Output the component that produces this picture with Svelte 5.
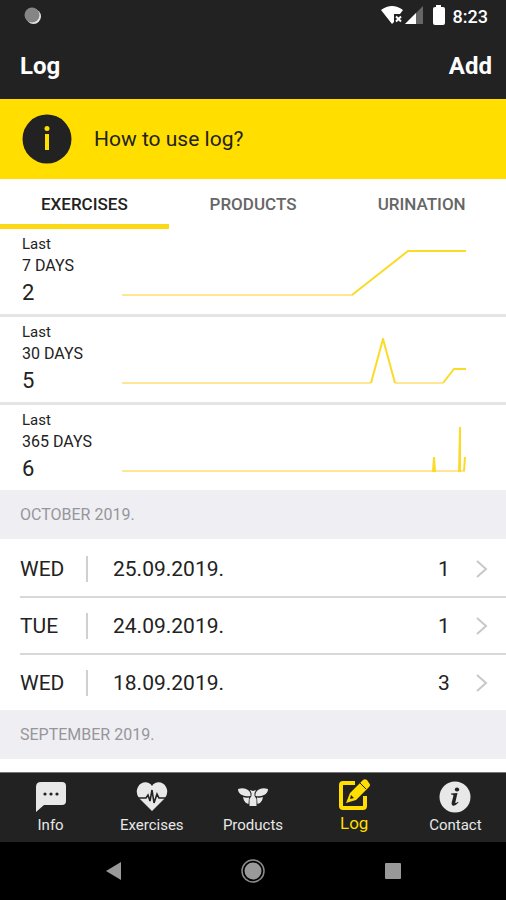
<script lang="ts">
	type Stat = {
		period: string;
		total: number;
		base: string;
		line: string;
	};

	type Entry = {
		day: string;
		date: string;
		count: number;
	};

	const tabs = ['EXERCISES', 'PRODUCTS', 'URINATION'];
	let activeTab = $state('EXERCISES');

	// charts are drawn on a 344x48 grid, zero level at y=45
	const stats: Stat[] = [
		{
			period: '7 DAYS',
			total: 2,
			base: 'M0 45H231',
			line: 'M230 45L286 1H344'
		},
		{
			period: '30 DAYS',
			total: 5,
			base: 'M0 45H249M273 45H321',
			line: 'M249 45L261 1L273 45M321 45L332 31H344'
		},
		{
			period: '365 DAYS',
			total: 6,
			base: 'M0 45H343',
			line: 'M311 46L312 31L313 46M337 46L338 1V46M342 45L343 31'
		}
	];

	const october: Entry[] = [
		{ day: 'WED', date: '25.09.2019.', count: 1 },
		{ day: 'TUE', date: '24.09.2019.', count: 1 },
		{ day: 'WED', date: '18.09.2019.', count: 3 }
	];

	const menu = ['Info', 'Exercises', 'Products', 'Log', 'Contact'];
	let activePage = $state('Log');
</script>

<div class="app">
	<div class="status">
		<svg class="dot" width="20" height="20" viewBox="0 0 20 20" aria-hidden="true">
			<circle cx="10.5" cy="10.5" r="7.5" fill="#e4e4e4" />
			<circle cx="9" cy="9" r="7.5" fill="#858585" />
		</svg>
		<div class="status-right">
			<svg width="64" height="22" viewBox="0 0 64 22" aria-hidden="true">
				<path d="M0 5Q11 -3 22 5L19 9H13V17L11 19Z" fill="#fff" />
				<path d="M15 11.5L20 16.5M20 11.5L15 16.5" stroke="#fff" stroke-width="2" />
				<path d="M24 19L42 1V19Z" fill="#666" />
				<path d="M24 19L35 8V19Z" fill="#fff" />
				<path d="M55 0H60V2H62Q64 2 64 4V18Q64 20 62 20H54Q52 20 52 18V4Q52 2 54 2H55Z" fill="#fff" />
			</svg>
			<span>8:23</span>
		</div>
	</div>

	<header>
		<h1>Log</h1>
		<button class="add">Add</button>
	</header>

	<a class="help" href="#help">
		<svg width="50" height="50" viewBox="0 0 50 50" aria-hidden="true">
			<circle cx="25" cy="25" r="24.5" fill="#222" />
			<circle cx="25" cy="14.5" r="2.5" fill="#ffde00" />
			<path d="M25 20V36" stroke="#ffde00" stroke-width="4" />
		</svg>
		<span>How to use log?</span>
	</a>

	<div class="tabs" role="tablist">
		{#each tabs as tab}
			<button
				role="tab"
				aria-selected={activeTab === tab}
				class:active={activeTab === tab}
				onclick={() => (activeTab = tab)}>{tab}</button
			>
		{/each}
	</div>

	<main>
		{#each stats as stat}
			<section class="stat">
				<div class="stat-text">
					<p>Last</p>
					<p class="period">{stat.period}</p>
					<strong>{stat.total}</strong>
				</div>
				<svg class="chart" viewBox="0 0 344 48" preserveAspectRatio="none" aria-hidden="true">
					<path class="base" d={stat.base} />
					<path class="line" d={stat.line} />
				</svg>
			</section>
		{/each}

		<h2>OCTOBER 2019.</h2>
		<ul>
			{#each october as entry}
				<li>
					<a href="#entry">
						<span class="day">{entry.day}</span>
						<span class="date">{entry.date}</span>
						<span class="count">{entry.count}</span>
						<svg width="12" height="18" viewBox="0 0 12 18" aria-hidden="true">
							<path d="M1 1L10 9L1 17" fill="none" stroke="#c8c8c8" stroke-width="2" />
						</svg>
					</a>
				</li>
			{/each}
		</ul>
		<h2>SEPTEMBER 2019.</h2>
	</main>

	<nav class="menu">
		{#each menu as item}
			<a href="#{item}" class:active={activePage === item} onclick={() => (activePage = item)}>
				<svg width="32" height="32" viewBox="0 0 32 32" aria-hidden="true">
					{#if item === 'Info'}
						<path d="M6 1H27Q31 1 31 5V20Q31 24 27 24H9L1 31V6Q1 1 6 1Z" fill="currentColor" />
						<g fill="#222">
							<circle cx="10" cy="13" r="1.6" />
							<circle cx="16" cy="13" r="1.6" />
							<circle cx="22" cy="13" r="1.6" />
						</g>
					{:else if item === 'Exercises'}
						<path
							d="M16 30L3 17Q-1 11 2 6C5 0 13 0 16 5C19 0 27 0 30 6Q33 11 29 17Z"
							fill="currentColor"
						/>
						<path
							d="M1 17H10L12 14L14 20L16 9L18 22L21 13L23 17H31"
							fill="none"
							stroke="#222"
							stroke-width="1.6"
						/>
					{:else if item === 'Products'}
						<g fill="currentColor">
							<path d="M1 8Q7 6 11 9Q14 11 13.5 15Q9 16 5 14Q1 12 1 8Z" />
							<path d="M31 8Q25 6 21 9Q18 11 18.5 15Q23 16 27 14Q31 12 31 8Z" />
							<path d="M6 16Q9 17 12 16.5L11.5 23Q7 22 6 16Z" />
							<path d="M26 16Q23 17 20 16.5L20.5 23Q25 22 26 16Z" />
							<path d="M13 9L16 10L19 9L17.5 12L17.5 15L19.5 18V25H12.5V18L14.5 15V12Z" />
						</g>
					{:else if item === 'Log'}
						<path
							d="M17 4H5Q3 4 3 6V27Q3 29 5 29H25Q27 29 27 27V17"
							fill="none"
							stroke="currentColor"
							stroke-width="4"
						/>
						<path
							d="M24 2Q26 -1 29 1L31 4Q33 6 31 8L18 21L8 24L12 14ZM13 16L12 20L16 19Z"
							fill="currentColor"
							fill-rule="evenodd"
						/>
						<path d="M22 4L28 10" stroke="#222" stroke-width="1" />
					{:else}
						<circle cx="16" cy="16" r="15.5" fill="currentColor" />
						<ellipse cx="18" cy="8.5" rx="2.2" ry="1.9" fill="#222" />
						<path
							d="M12 12.5L18.5 12L16.3 21.5Q16.3 23 19 20.8L19.5 21.5Q16 25.5 13.5 24.5Q12 23.5 12.8 21L14.5 14.5Q14.5 13.5 12 13.5Z"
							fill="#222"
						/>
					{/if}
				</svg>
				<span>{item}</span>
			</a>
		{/each}
	</nav>

	<div class="system">
		<button aria-label="Back">
			<svg width="24" height="24" viewBox="0 0 24 24">
				<path d="M5 12L20 3V21Z" fill="#999" />
			</svg>
		</button>
		<button aria-label="Home">
			<svg width="24" height="24" viewBox="0 0 24 24">
				<circle cx="12" cy="12" r="11" fill="none" stroke="#8c8c8c" stroke-width="1.5" />
				<circle cx="12" cy="12" r="8.5" fill="#999" />
			</svg>
		</button>
		<button aria-label="Overview">
			<svg width="24" height="24" viewBox="0 0 24 24">
				<rect x="4" y="4" width="16" height="16" rx="1" fill="#999" />
			</svg>
		</button>
	</div>
</div>

<style>
	:global(body) {
		background: #fff;
	}

	.app {
		display: flex;
		flex-direction: column;
		min-height: 100vh;
		font-family: Roboto, 'Liberation Sans', sans-serif;
		color: #222;
	}

	h1,
	h2,
	p,
	ul {
		margin: 0;
		padding: 0;
	}

	button {
		padding: 0;
		border: 0;
		background: none;
		font: inherit;
		color: inherit;
	}

	a {
		color: inherit;
		text-decoration: none;
	}

	svg {
		display: block;
		flex-shrink: 0;
	}

	.status {
		display: flex;
		justify-content: space-between;
		align-items: center;
		height: 32px;
		padding: 0 18px 0 23px;
		background: #222;
		color: #fff;
	}

	.status-right {
		display: flex;
		align-items: center;
		gap: 8px;
		font-size: 18px;
		font-weight: 500;
	}

	header {
		display: flex;
		justify-content: space-between;
		align-items: center;
		height: 67px;
		padding: 0 14px 0 20px;
		background: #222;
		color: #fff;
	}

	h1,
	.add {
		font-size: 24px;
		font-weight: 700;
	}

	.help {
		display: flex;
		align-items: center;
		gap: 22px;
		height: 80px;
		padding: 0 22px;
		background: #ffde00;
		font-size: 21px;
	}

	.tabs {
		display: grid;
		grid-template-columns: repeat(3, 1fr);
		height: 50px;
	}

	.tabs button {
		padding-top: 4px;
		border-bottom: 5px solid transparent;
		font-size: 17px;
		font-weight: 500;
		color: #666;
	}

	.tabs .active {
		border-color: #fbd914;
		color: #222;
	}

	main {
		flex: 1;
	}

	.stat {
		display: flex;
		padding: 5px 40px 5px 22px;
		border-bottom: 3px solid #e4e4e4;
	}

	.stat:nth-of-type(3) {
		border-bottom: 0;
	}

	.stat-text {
		width: 100px;
		font-size: 15px;
		line-height: 21px;
	}

	.stat .period {
		font-size: 16px;
	}

	.stat strong {
		display: block;
		font-size: 22px;
		font-weight: 400;
		line-height: 33px;
	}

	.chart {
		flex: 1;
		min-width: 0;
		height: 48px;
		margin-top: 16px;
	}

	.chart path {
		fill: none;
		stroke-width: 2px;
		vector-effect: non-scaling-stroke;
	}

	.base {
		stroke: #ffe695;
	}

	.line {
		stroke: #fbdb25;
	}

	h2 {
		padding: 0 20px;
		background: #efeef3;
		font-size: 16px;
		font-weight: 400;
		line-height: 49px;
		color: #96969a;
	}

	ul {
		padding: 2px 0 0 20px;
		list-style: none;
	}

	li {
		border-bottom: 2px solid #d8d8d8;
	}

	li:last-child {
		border-bottom: 0;
	}

	li a {
		display: flex;
		align-items: center;
		height: 55px;
		padding-right: 18px;
		font-size: 21px;
	}

	.day {
		width: 66px;
		border-right: 2px solid #d0d0d0;
		line-height: 26px;
	}

	.date {
		flex: 1;
		padding-left: 25px;
	}

	.count {
		width: 38px;
	}

	.menu {
		display: grid;
		grid-template-columns: repeat(5, 1fr);
		height: 69px;
		border-top: 1px solid #777;
		background: #222;
		color: #e8e8e8;
		font-size: 15px;
	}

	.menu a {
		display: flex;
		flex-direction: column;
		align-items: center;
		gap: 2px;
		padding-top: 8px;
		line-height: 20px;
	}

	.menu .active {
		padding-top: 6px;
		color: #ffde00;
		font-size: 17px;
	}

	.system {
		display: grid;
		grid-template-columns: repeat(3, 1fr);
		height: 58px;
		padding: 0 43px;
		background: #000;
	}

	.system button {
		display: flex;
		justify-content: center;
		align-items: center;
	}
</style>
